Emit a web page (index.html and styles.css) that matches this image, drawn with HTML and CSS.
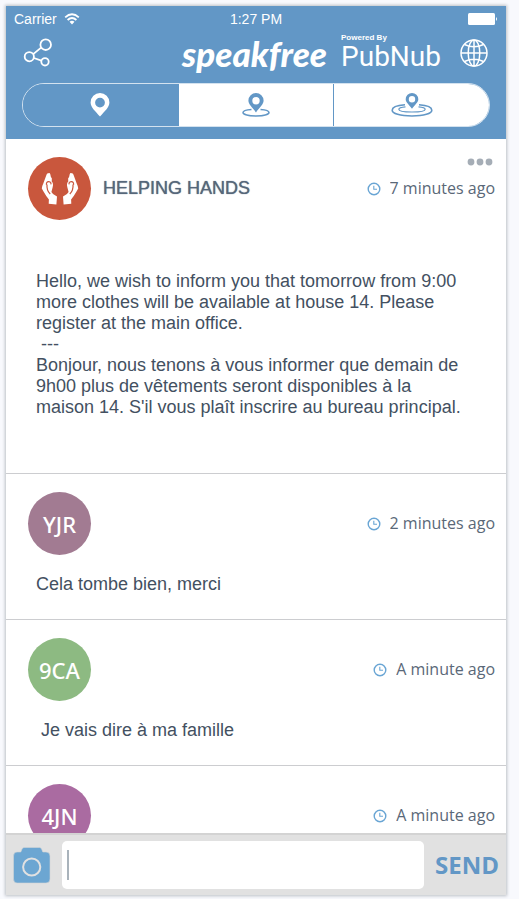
FILE: index.html
```html
<!DOCTYPE html>
<html lang="en">
<head>
<meta charset="utf-8">
<meta name="viewport" content="width=device-width, initial-scale=1">
<title>speakfree</title>
<link rel="stylesheet" href="styles.css">
</head>
<body>
<svg class="defs" aria-hidden="true">
  <symbol id="clock" viewBox="0 0 14 14"><circle cx="7" cy="7" r="5.8" fill="none" stroke="currentColor" stroke-width="1.4"/><path d="M6.8 3.8V7.3H10" fill="none" stroke="currentColor" stroke-width="1.1"/></symbol>
</svg>
<div class="phone">
  <header class="top">
    <div class="status">
      <span class="carrier">Carrier
        <svg width="16" height="12" viewBox="0 0 16 12"><g fill="none" stroke="#fff" stroke-width="1.8"><path d="M1.2 4.3Q8-1.9 14.8 4.3"/><path d="M3.6 7Q8 3 12.4 7"/></g><path d="M5.5 8.8Q8 6.8 10.5 8.8L8 11.4Z" fill="#fff"/></svg>
      </span>
      <span>1:27 PM</span>
      <svg class="battery" width="30" height="12" viewBox="0 0 30 12"><rect width="27" height="12" rx="1.5" fill="#fff"/><path d="M28 4Q30 6 28 8Z" fill="#fff"/></svg>
    </div>
    <div class="brand">
      <button class="icon" aria-label="Share"><svg width="30" height="30" viewBox="0 0 30 30" fill="none" stroke="#fff" stroke-width="1.8"><circle cx="22.7" cy="6.7" r="5.3"/><circle cx="6.3" cy="18.7" r="4.6"/><circle cx="22" cy="23.8" r="3.7"/><path d="M10.2 16.1 18.1 9.6M10.8 20 18.4 22.6"/></svg></button>
      <h1 class="logo">speakfree</h1>
      <p class="powered"><small>Powered By</small><b>PubNub</b></p>
      <button class="icon" aria-label="Language"><svg width="28" height="28" viewBox="0 0 28 28" fill="none" stroke="#fff" stroke-width="1.5"><circle cx="14" cy="14" r="13"/><ellipse cx="14" cy="14" rx="5.8" ry="13"/><path d="M14 1V27M1 14H27M4.5 5.5Q14 10 23.5 5.5M4.5 22.5Q14 18 23.5 22.5"/></svg></button>
    </div>
    <nav class="tabs">
      <button class="tab active" aria-label="Here"><svg width="20" height="24" viewBox="0 0 20 24"><path fill="currentColor" fill-rule="evenodd" d="M10 0A9.4 9.4 0 0 1 19.4 9.4C19.4 14.5 14.5 18 10 23.6C5.5 18 .6 14.5.6 9.4A9.4 9.4 0 0 1 10 0ZM10 4.7A4.9 4.9 0 1 0 10 14.5A4.9 4.9 0 1 0 10 4.7Z"/></svg></button>
      <button class="tab" aria-label="Nearby"><svg width="28" height="24" viewBox="0 0 28 24"><path d="M9.500 16.400C4.500 16.700 1 18 1 19.600C1 21.500 6.500 23 14 23S27 21.500 27 19.600C27 18 23.500 16.700 18.500 16.400" fill="none" stroke="currentColor" stroke-width="1.500"/><path fill="currentColor" fill-rule="evenodd" d="M14 0A7.600 7.600 0 0 1 21.600 7.600C21.600 11.500 17.500 14.500 14 19.500C10.500 14.500 6.400 11.500 6.400 7.600A7.600 7.600 0 0 1 14 0ZM14 4A3.700 3.700 0 1 0 14 11.400A3.700 3.700 0 1 0 14 4Z"/></svg></button>
      <button class="tab" aria-label="Everywhere"><svg width="42" height="24" viewBox="0 0 42 24"><g fill="none" stroke="currentColor"><path stroke-width="1.600" d="M14 11.800C6 12.400 1.200 14.600 1.200 17.200C1.200 20.500 9 23 21 23S40.800 20.500 40.800 17.200C40.800 14.600 36 12.400 28 11.800"/><path stroke-width="1.200" d="M14.500 13.800C10.500 14.200 7.800 15 7.800 16.200C7.800 18 13 19 21 19S34.200 18 34.200 16.200C34.200 15 31.500 14.200 27.500 13.800"/></g><path fill="currentColor" fill-rule="evenodd" d="M21 0A6.300 6.300 0 0 1 27.300 6.300C27.300 9.500 24 11.500 21 15.800C18 11.500 14.700 9.500 14.700 6.300A6.300 6.300 0 0 1 21 0ZM21 3.100A3.200 3.200 0 1 0 21 9.500A3.200 3.200 0 1 0 21 3.100Z"/></svg></button>
    </nav>
  </header>
  <main class="feed">
    <article class="post featured">
      <button class="more" aria-label="More"><svg width="26" height="8" viewBox="0 0 26 8" fill="#a5adb6"><circle cx="4" cy="4" r="3.400"/><circle cx="13" cy="4" r="3.400"/><circle cx="22" cy="4" r="3.400"/></svg></button>
      <div class="head">
        <span class="avatar red"><svg width="38" height="34" viewBox="0 0 38 34"><g id="hand"><path fill="#fff" d="M5.500 2.800Q6 .8 7.300 1.200Q8.800.4 9.300 2.300L9.900 5Q11.300 6 10.800 8.200L10.700 9.600Q12.800 11.500 11.600 15.500L10.400 20Q11.500 22.500 16 24.500L15.400 32.600 7.700 31.800 7.900 27.500Q5 24 2.500 19.500L.8 16.500Q1 14 2.300 11.500Z"/><path fill="none" stroke="#c9573d" stroke-width="1.200" d="M5.400 12.800Q5.200 9.400 7.800 9.600Q10.600 10 9.800 12.400M6 12.500Q5.500 18.500 9.200 22"/></g><use href="#hand" transform="matrix(-1 0 0 1 38 0)"/></svg></span>
        <h2 class="name">HELPING HANDS</h2>
        <svg class="clock" width="14" height="14"><use href="#clock"/></svg><time class="time">7 minutes ago</time>
      </div>
      <p class="text">Hello, we wish to inform you that tomorrow from 9:00<br>more clothes will be available at house 14. Please<br>register at the main office.<br>&nbsp;---<br>Bonjour, nous tenons à vous informer que demain de<br>9h00 plus de vêtements seront disponibles à la<br>maison 14. S'il vous plaît inscrire au bureau principal.</p>
    </article>
    <article class="post">
      <div class="head">
        <span class="avatar mauve">YJR</span>
        <svg class="clock" width="14" height="14"><use href="#clock"/></svg><time class="time">2 minutes ago</time>
      </div>
      <p class="text">Cela tombe bien, merci</p>
    </article>
    <article class="post">
      <div class="head">
        <span class="avatar green">9CA</span>
        <svg class="clock" width="14" height="14"><use href="#clock"/></svg><time class="time">A minute ago</time>
      </div>
      <p class="text">&nbsp;Je vais dire à ma famille</p>
    </article>
    <article class="post">
      <div class="head">
        <span class="avatar purple">4JN</span>
        <svg class="clock" width="14" height="14"><use href="#clock"/></svg><time class="time">A minute ago</time>
      </div>
    </article>
  </main>
  <form class="composer">
    <button type="button" class="icon" aria-label="Add photo"><svg width="38" height="38" viewBox="0 0 38 38"><path fill="#6ca6d2" stroke="#d2d5d6" stroke-width=".6" d="M11 1.500H26.500Q28 1.500 28.600 3L29.800 6H33Q37 6 37 10V33Q37 37 33 37H4Q.5 37 .5 33V10Q.5 6 4 6H7.800L9 3Q9.600 1.500 11 1.500Z"/><circle cx="18.700" cy="21" r="8.600" fill="none" stroke="#e1e1e1" stroke-width="2"/></svg></button>
    <label class="field"><span class="caret"></span><input type="text" aria-label="Message"></label>
    <button type="button" class="send">SEND</button>
  </form>
</div>
</body>
</html>
```
FILE: styles.css
```css
* { box-sizing: border-box; }

body {
  display: flex;
  height: 100vh;
  margin: 0;
  padding: 6px 13px 4px 6px;
  background: #f8f9fd;
  color: #435061;
  font-family: "Liberation Sans", sans-serif;
}

h1, h2, p { margin: 0; font-weight: normal; }

button {
  padding: 0;
  border: 0;
  background: none;
  font: inherit;
}

svg { display: block; flex: none; }

.defs { position: absolute; width: 0; height: 0; }

.phone {
  display: flex;
  flex: 1;
  flex-direction: column;
  min-width: 0;
  background: #fff;
  box-shadow: 0 0 3px 1px #bcc0c6;
}

.top {
  padding: 3px 16px 12px;
  background: #6297c6;
  color: #fff;
}

.status {
  display: grid;
  grid-template-columns: 1fr auto 1fr;
  align-items: center;
  height: 20px;
  margin: 0 -8px;
  font-size: 14px;
}

.carrier { display: flex; align-items: center; gap: 7px; }
.battery { justify-self: end; }

.brand {
  display: flex;
  align-items: center;
  height: 48px;
  margin-bottom: 6px;
}

.icon { flex: none; }
.brand .icon { padding: 0 2px 0 1px; }

.logo {
  margin-left: auto;
  font: italic 900 35px/40px Lato, sans-serif;
}

.powered { margin: 0 18px 0 14px; }

.powered small {
  display: block;
  font-size: 8px;
  font-weight: bold;
  line-height: 8px;
}

.powered b {
  display: block;
  font: 400 28px/30px Roboto, sans-serif;
}

.tabs {
  display: flex;
  height: 44px;
  overflow: hidden;
  border: 1px solid #d3e2ef;
  border-radius: 22px;
}

.tab {
  display: flex;
  flex: 1;
  align-items: center;
  justify-content: center;
  background: #fff;
  color: #6297c6;
}

.tab + .tab { border-left: 1px solid #6297c6; }
.tab.active { background: #6297c6; color: #fff; }

.feed { flex: 1; min-height: 0; overflow: hidden; }

.post {
  position: relative;
  padding: 18px 11px 24px 22px;
  border-bottom: 1px solid #cccdd0;
}

.featured { padding-bottom: 55px; }

.more { position: absolute; top: 19px; right: 13px; }

.head { display: flex; align-items: center; }

.avatar {
  display: flex;
  align-items: center;
  justify-content: center;
  width: 63px;
  height: 63px;
  border-radius: 50%;
  color: #fff;
  font: 500 22px/28px "Noto Sans", sans-serif;
}

.red { background: #c9573d; }
.mauve { background: #a27b92; }
.green { background: #8dba82; }
.purple { background: #aa6ba1; }

.name {
  margin-left: 12px;
  color: #56677a;
  font-size: 18px;
  text-shadow: 0 0 1px #56677a;
}

.clock { margin-left: auto; color: #69a5d4; }

.time {
  height: 19px;
  margin-left: 9px;
  overflow: hidden;
  color: #5a6878;
  font: 16px/18px "Open Sans", sans-serif;
}

.text {
  margin: 19px 0 0 8px;
  font-size: 18px;
  line-height: 21px;
}

.featured .text { margin-top: 51px; }

.composer {
  display: flex;
  align-items: center;
  gap: 11px;
  height: 62px;
  padding: 0 7px;
  border-top: 2px solid #d3d3d3;
  background: #e1e1e1;
}

.field {
  display: flex;
  flex: 1;
  align-items: center;
  min-width: 0;
  height: 48px;
  padding-left: 5px;
  border-radius: 5px;
  background: #fff;
}

.caret { width: 2px; height: 30px; background: #a9b3bb; }

.field input {
  flex: 1;
  min-width: 0;
  height: 100%;
  border: 0;
  outline: 0;
  background: none;
  font: 18px "Liberation Sans", sans-serif;
}

.send {
  color: #6297c6;
  font: 700 24px/32px "Open Sans", sans-serif;
}
```
